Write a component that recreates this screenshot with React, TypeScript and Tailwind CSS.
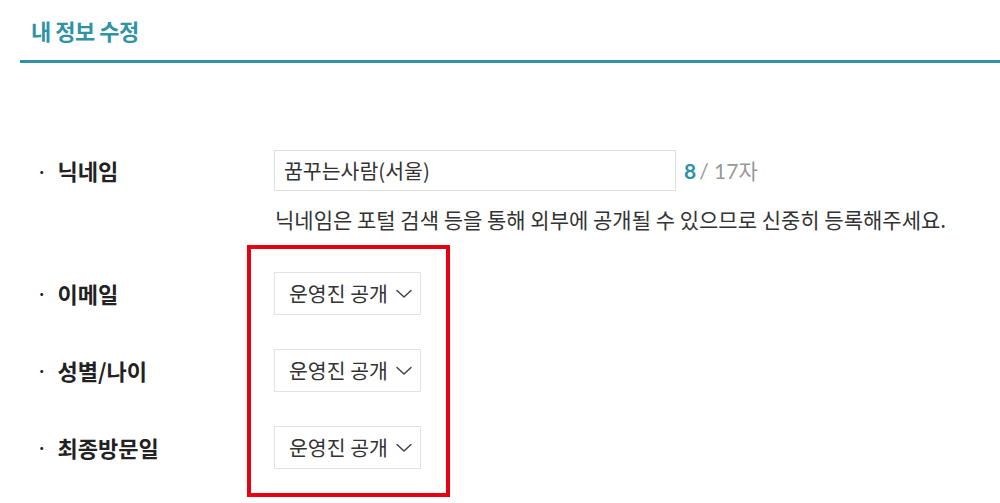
const font = { fontFamily: '"Noto Sans CJK KR", "Noto Sans", sans-serif' };

function Label({ text }: { text: string }) {
  return (
    <div className="w-[274px] shrink-0 pl-[37px] flex items-center gap-[11px] text-[22px] font-bold text-[#222]">
      <span className="text-[16px] font-bold">·</span>
      <span>{text}</span>
    </div>
  );
}

function Chevron() {
  return (
    <svg width="16" height="10" viewBox="0 0 16 10" fill="none" className="shrink-0 mt-[2px]">
      <polyline points="1,1.5 8,8 15,1.5" stroke="#444" strokeWidth="1.5" strokeLinecap="round" strokeLinejoin="round" />
    </svg>
  );
}

function VisibilitySelect() {
  return (
    <div className="w-[147px] h-[43px] border border-[#e2e2e2] bg-white flex items-center pl-[14px] gap-[8px] text-[20.5px] text-[#333]">
      <span className="whitespace-nowrap">운영진 공개</span>
      <Chevron />
    </div>
  );
}

const selectRows = ["이메일", "성별/나이", "최종방문일"];

export default function App() {
  return (
    <div className="w-[1000px] h-[503px] bg-white overflow-hidden" style={font}>
      <div className="h-[60px] pl-[31px] flex items-center">
        <h1 className="text-[22px] font-bold text-[#2f93a4] tracking-[-0.5px]">내 정보 수정</h1>
      </div>
      <div className="ml-[20px] h-[3px] bg-[#2f93a4]" />

      <div className="mt-[87px]">
        <div className="flex h-[41px]">
          <Label text="닉네임" />
          <div className="w-[402px] h-[41px] border border-[#dedede] flex items-center px-[9px] text-[20.5px] text-[#333]">
            꿈꾸는사람(서울)
          </div>
          <div className="ml-[8px] flex items-center text-[21px]" style={{ fontFamily: 'Lato, "Noto Sans CJK KR", sans-serif' }}>
            <span className="font-bold text-[#2f93a4]">8</span>
            <span className="text-[#999] ml-[3px]">/ 17자</span>
          </div>
        </div>
        <p className="mt-[13px] ml-[275px] text-[21px] text-[#333] whitespace-nowrap">
          닉네임은 포털 검색 등을 통해 외부에 공개될 수 있으므로 신중히 등록해주세요.
        </p>

        <div className="relative mt-[36px] flex flex-col gap-[34px]">
          {selectRows.map(label => (
            <div key={label} className="flex h-[43px]">
              <Label text={label} />
              <VisibilitySelect />
            </div>
          ))}
          {/* highlight frame around the visibility selects */}
          <div className="absolute left-[247px] top-[-27px] w-[203px] h-[252px] border-[4px] border-[#e60012] pointer-events-none" />
        </div>
      </div>
    </div>
  );
}
